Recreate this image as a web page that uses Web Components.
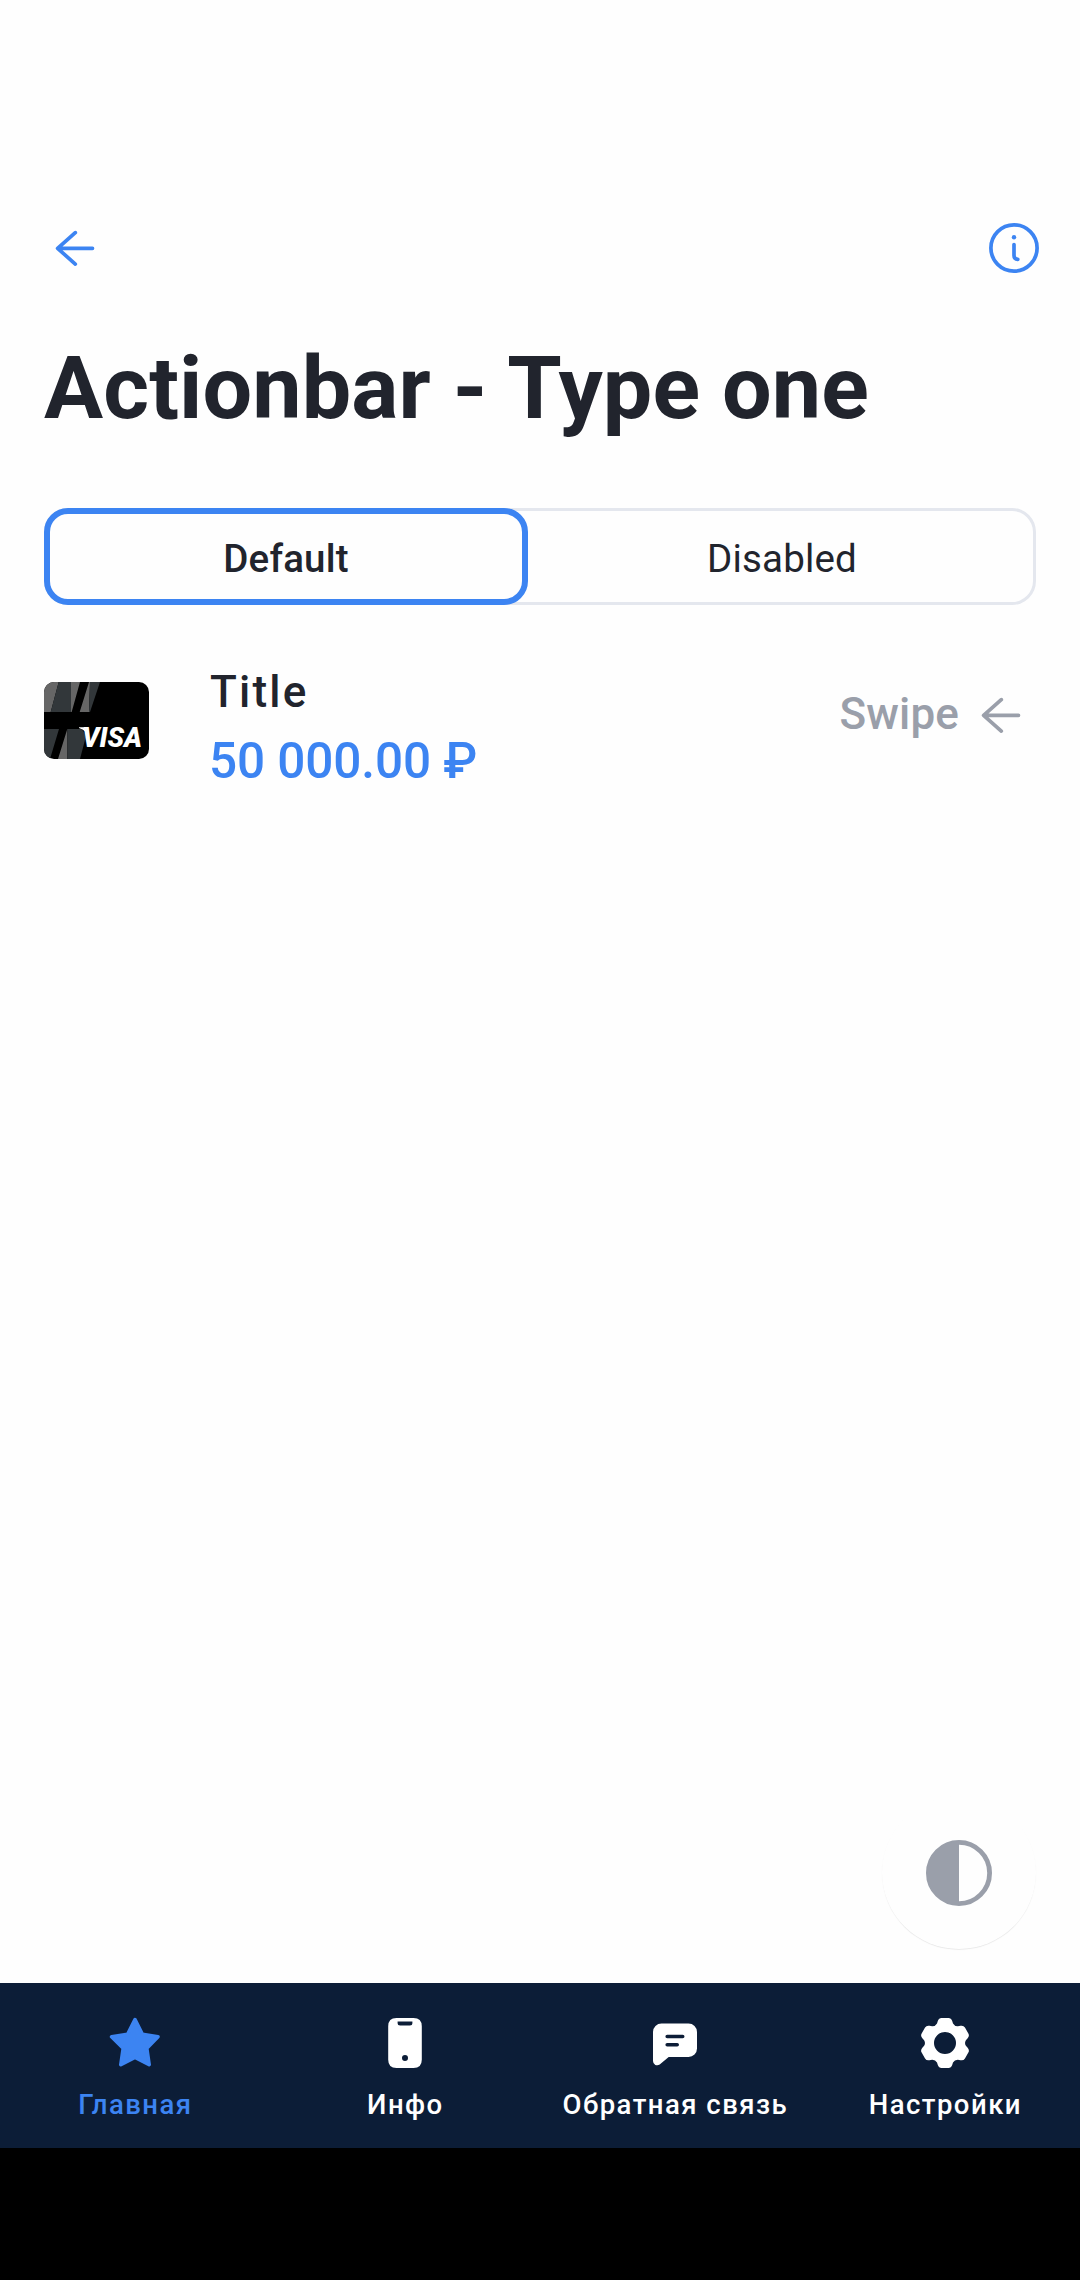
<!DOCTYPE html>
<html lang="ru">
<head>
<meta charset="utf-8">
<title>Actionbar - Type one</title>
<style>
html,body{margin:0;padding:0}
body{width:1080px;height:2280px;overflow:hidden;background:#fefefe;font-family:Roboto,"Noto Sans",sans-serif;color:#21242d}
</style>
</head>
<body>
<app-screen>
  <top-bar slot="top"></top-bar>
  <page-title slot="main">Actionbar - Type one</page-title>
  <segment-control slot="main">
    <segment-item selected>Default</segment-item>
    <segment-item>Disabled</segment-item>
  </segment-control>
  <account-row slot="main">
    <bank-card slot="media"></bank-card>
    <span slot="title">Title</span>
    <span slot="amount">50 000.00 ₽</span>
    <span slot="hint">Swipe</span>
  </account-row>
  <theme-button slot="fab"></theme-button>
  <tab-bar slot="bottom">
    <tab-item icon="star" active>Главная</tab-item>
    <tab-item icon="phone">Инфо</tab-item>
    <tab-item icon="chat">Обратная связь</tab-item>
    <tab-item icon="gear">Настройки</tab-item>
  </tab-bar>
</app-screen>
<script>
const define = (name, markup) => customElements.define(name, class extends HTMLElement {
  constructor() {
    super();
    this.attachShadow({ mode: 'open' }).innerHTML = markup;
  }
});

const icons = {
  back: '<svg viewBox="0 0 66 66"><path d="M33.3 17.6 15.6 33.3l17.7 15.8M16 33.3h34.500" fill="none" stroke="currentColor" stroke-width="3.700" stroke-linecap="round" stroke-linejoin="round"/></svg>',
  info: '<svg viewBox="0 0 66 66"><g fill="none" stroke="currentColor" stroke-width="3.700" stroke-linecap="round"><circle cx="33" cy="33" r="23.100"/><path d="M33 29.500v11q0 3.600 3.800 3.800"/></g><circle cx="33" cy="22.200" r="2.200" fill="currentColor"/></svg>',
  star: '<svg viewBox="0 0 66 66"><path d="M33 9.600 40.400 24.200 56 26.700 44.800 38.300 47.200 54.700 33 47.400 18.800 54.700 21.200 38.300 9.600 26.700 25.600 24.200Z" fill="currentColor" stroke="currentColor" stroke-width="3.600" stroke-linejoin="round"/></svg>',
  phone: '<svg viewBox="0 0 66 66"><path fill-rule="evenodd" d="M24.500 8h17q8.300 0 8.300 8.300v33.400q0 8.300-8.300 8.300h-17q-8.300 0-8.300-8.300v-33.400q0-8.300 8.300-8.300Z M25.600 11.500v1.600q0 2.500 2.500 2.500h9.800q2.500 0 2.500-2.500v-1.600Z M33 45a3 3 0 1 0 0 6a3 3 0 1 0 0-6Z" fill="currentColor"/></svg>',
  chat: '<svg viewBox="0 0 66 66"><path d="M19.500 13.500h27a8.500 8.500 0 0 1 8.500 8.500v16.500a8.500 8.500 0 0 1-8.500 8.500h-19.800l-9 7.500q-2 1.400-4.400.4q-2.300-1.200-2.300-3.900V22a8.500 8.500 0 0 1 8.500-8.500Z" fill="currentColor"/><path d="M25.200 26.500h15.500M25.200 34.800h10" stroke="#0c1d37" stroke-width="3.600" stroke-linecap="round"/></svg>'
};

// Six-lobed cog: the same tooth is turned by 60 degrees around the centre.
icons.gear = (() => {
  const at = (x, y, k) => {
    const a = k * Math.PI / 3;
    return (33 + x * Math.cos(a) - y * Math.sin(a)).toFixed(2) + ' ' + (33 + x * Math.sin(a) + y * Math.cos(a)).toFixed(2);
  };
  let d = '';
  for (let k = 0; k < 6; k++) {
    d += (k ? 'L' : 'M') + at(-8, -19.5, k)
      + 'L' + at(-7.2, -22, k) + 'Q' + at(-6.2, -25, k) + ' ' + at(-3.4, -25, k)
      + 'L' + at(3.4, -25, k) + 'Q' + at(6.2, -25, k) + ' ' + at(7.2, -22, k)
      + 'L' + at(8, -19.5, k) + 'Q' + at(9.6, -16.6, k) + ' ' + at(-8, -19.5, k + 1);
  }
  d += 'Z M33 22a11 11 0 1 0 0 22a11 11 0 1 0 0-22Z';
  return '<svg viewBox="0 0 66 66"><path fill="currentColor" fill-rule="evenodd" d="' + d + '"/></svg>';
})();

customElements.define('ui-icon', class extends HTMLElement {
  constructor() { super(); this.attachShadow({ mode: 'open' }); }
  connectedCallback() {
    this.shadowRoot.innerHTML = '<style>:host{display:block;width:66px;height:66px;flex:none}svg{display:block;width:66px;height:66px}</style>' + icons[this.getAttribute('name')];
  }
});

define('app-screen', `<style>
:host{display:flex;flex-direction:column;width:1080px;height:2280px;position:relative}
main{flex:1;display:flex;flex-direction:column;padding:0 44px}
.fab{position:absolute;right:44px;top:1796px}
</style><slot name="top"></slot><main><slot name="main"></slot></main><div class="fab"><slot name="fab"></slot></div><slot name="bottom"></slot>`);

define('top-bar', `<style>
:host{display:flex;justify-content:space-between;align-items:center;box-sizing:border-box;height:325px;padding:171px 33px 0 42px;color:#3c84f2}
</style><ui-icon name="back"></ui-icon><ui-icon name="info"></ui-icon>`);

define('page-title', `<style>
:host{display:block;margin-top:8px;font-size:88px;line-height:110px;font-weight:700;letter-spacing:.1px;white-space:nowrap}
</style><slot></slot>`);

define('segment-control', `<style>
:host{display:flex;box-sizing:border-box;height:97px;margin-top:65px;border-radius:24px;box-shadow:inset 0 0 0 3px #e4e7ee}
</style><slot></slot>`);

define('segment-item', `<style>
:host{display:flex;flex:1;align-items:center;justify-content:center;box-sizing:border-box;font-size:38.5px;line-height:50px;letter-spacing:.18px;padding:4px 0 0 0}
:host([selected]){flex:0 0 484px;padding:0;border:6px solid #3c84f2;border-radius:24px;background:#fefefe;font-weight:500}
:host([selected]) span{padding-top:4px}
</style><span><slot></slot></span>`);

define('account-row', `<style>
:host{display:flex;align-items:flex-start;margin-top:54px}
.media{margin:23px 61px 0 0}
.text{flex:1;display:flex;flex-direction:column;gap:3px;font-weight:500;line-height:66px;white-space:nowrap}
.title{font-size:44px;letter-spacing:2.2px}
.amount{margin-left:-1px;font-size:49.5px;letter-spacing:-.1px;color:#3c84f2}
.hint{display:flex;align-items:center;margin:22px 2px 0 0;gap:9px;color:#9a9faa;font-size:44px;line-height:66px;letter-spacing:.12px;font-weight:500}
ui-icon{margin:1px 0 -1px}
</style>
<div class="media"><slot name="media"></slot></div>
<div class="text"><div class="title"><slot name="title"></slot></div><div class="amount"><slot name="amount"></slot></div></div>
<div class="hint"><slot name="hint"></slot><ui-icon name="back"></ui-icon></div>`);

define('bank-card', `<style>
:host{display:block;width:105px;height:77px;border-radius:10px;overflow:hidden;background:#000}svg{display:block}
</style><svg width="105" height="77" viewBox="0 0 105 77">
<path fill="#666" d="M0 0H14.700L6.700 30H0ZM27 0H36L27.700 30H27ZM45 0H46L45 30H35.700ZM23.300 47V77H14Z"/>
<path fill="#32373a" d="M14.700 0H27V30H6.700ZM46 0H56L46 30H45ZM0 47H15L6 77H0ZM23.300 47H37Q40 48 41.500 56L36 77H23.300Z"/>
<path fill="#fff" d="M35 45.300H43L45.500 56Q42.500 48 35 45.900Z"/>
<text x="38" y="65" textLength="60" lengthAdjust="spacingAndGlyphs" font-family="Roboto" font-size="28" font-weight="900" font-style="italic" fill="#fff">VISA</text>
</svg>`);

define('theme-button', `<style>
:host{display:flex;justify-content:center;box-sizing:border-box;width:154px;height:153px;padding-top:44px;border-radius:50%;background:#fefefe;box-shadow:0 1px 1px -.3px rgba(0,0,0,.1)}
svg{display:block}
</style><svg width="66" height="66" viewBox="0 0 66 66"><circle cx="33" cy="33" r="30.600" fill="none" stroke="#9a9faa" stroke-width="4.800"/><path d="M33 1a32 32 0 0 0 0 64Z" fill="#9a9faa"/></svg>`);

define('tab-bar', `<style>
:host{display:flex;height:165px;background:#0c1d37;border-bottom:132px solid #000}
</style><slot></slot>`);

customElements.define('tab-item', class extends HTMLElement {
  constructor() { super(); this.attachShadow({ mode: 'open' }); }
  connectedCallback() {
    this.shadowRoot.innerHTML = `<style>
:host{flex:1;display:flex;flex-direction:column;align-items:center;padding-top:27px;gap:11px;color:#fff;font-size:27.5px;line-height:36px;font-weight:500;letter-spacing:1.48px;white-space:nowrap}
:host([active]){color:#3c84f2}
span{padding-left:.7px}
</style><ui-icon name="${this.getAttribute('icon')}"></ui-icon><span><slot></slot></span>`;
  }
});
</script>
</body>
</html>
